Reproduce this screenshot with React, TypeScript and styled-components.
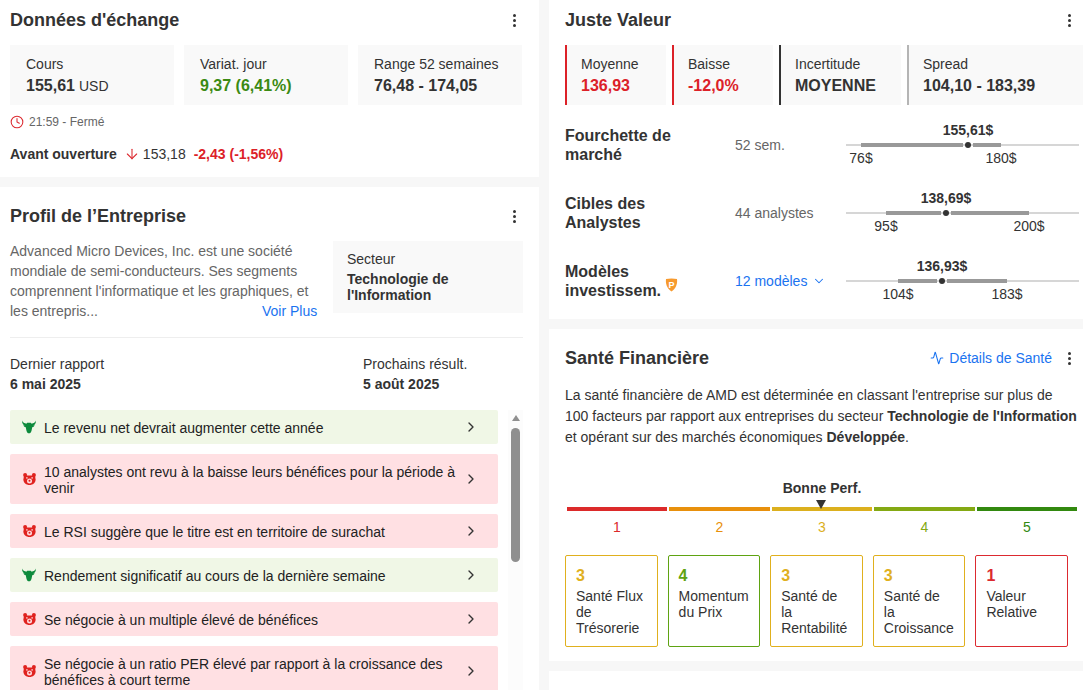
import React from "react";
import styled, { createGlobalStyle } from "styled-components";
import { Activity, ArrowDown, ChevronDown, ChevronRight, Clock } from "lucide-react";

const Global = createGlobalStyle`
  html, body { margin: 0; padding: 0; background: #f7f7f7; }
  body { font-family: "Liberation Sans", Arial, sans-serif; color: #333; overflow: hidden; }
  * { box-sizing: border-box; }
`;

const Page = styled.div`
  display: grid;
  grid-template-columns: 539px 534px;
  gap: 10px;
  width: 1083px;
  height: 690px;
  overflow: hidden;
`;
const Column = styled.div`
  display: flex;
  flex-direction: column;
  gap: 10px;
  min-width: 0;
`;
const Card = styled.section<{ $h: number; $left?: number; $right?: number }>`
  height: ${(p) => p.$h}px;
  flex: none;
  background: #fff;
  padding: 0 ${(p) => p.$right ?? 17}px 0 ${(p) => p.$left ?? 10}px;
  overflow: hidden;
`;
const Head = styled.header<{ $top?: number; $right?: number }>`
  height: 40px;
  margin-top: ${(p) => p.$top ?? 0}px;
  padding-right: ${(p) => p.$right ?? 0}px;
  display: flex;
  align-items: center;
  justify-content: space-between;
`;
const Title = styled.h2`
  margin: 0;
  font-size: 18px;
  line-height: 22px;
  font-weight: 700;
  color: #333;
`;
const DotsBox = styled.span`
  width: 14px;
  height: 14px;
  display: inline-flex;
  flex-direction: column;
  align-items: center;
  justify-content: center;
  gap: 2px;
  flex: none;
  i { width: 3px; height: 3px; border-radius: 50%; background: #333; display: block; }
`;
const Dots = () => (
  <DotsBox><i /><i /><i /></DotsBox>
);
const StatRow = styled.div<{ $cols: string }>`
  display: grid;
  grid-template-columns: ${(p) => p.$cols};
  gap: 10px;
  height: 60px;
  margin-top: 5px;
`;
const StatRowTight = styled(StatRow)`
  gap: 6px;
`;
const Stat = styled.div<{ $edge?: string }>`
  background: #f9f9f9;
  padding: 10px 0 0 ${(p) => (p.$edge ? 14 : 16)}px;
  border-left: ${(p) => (p.$edge ? `2px solid ${p.$edge}` : "none")};
  white-space: nowrap;
`;
const StatLabel = styled.div`
  font-size: 14px;
  line-height: 19px;
  color: #333;
`;
const StatValue = styled.div<{ $c?: string }>`
  font-size: 16px;
  line-height: 23px;
  font-weight: 700;
  color: ${(p) => p.$c ?? "#333"};
`;
const Unit = styled.span`
  font-size: 14px;
  font-weight: 400;
  margin-left: 4px;
`;
const TimeRow = styled.div`
  display: flex;
  align-items: center;
  gap: 5px;
  height: 16px;
  margin-top: 9px;
  font-size: 12px;
  color: #666;
  svg { color: #dc2a30; flex: none; }
`;
const PreRow = styled.div`
  display: flex;
  align-items: center;
  height: 20px;
  margin-top: 14px;
  font-size: 14px;
  color: #333;
`;
const PreLabel = styled.strong`
  font-weight: 700;
  margin-right: 7px;
`;
const PreArrow = styled.span`
  display: inline-flex;
  color: #dc2a30;
  margin-right: 3px;
`;
const PreDelta = styled.strong`
  color: #dc2128;
  font-size: 14px;
  font-weight: 700;
  margin-left: 8px;
`;
const ProfileTop = styled.div`
  display: grid;
  grid-template-columns: 323px 190px;
  height: 96px;
  margin-top: 5px;
  gap: 0;
  margin-right: -1px;
`;
const Desc = styled.p`
  margin: 0;
  width: 310px;
  font-size: 14px;
  line-height: 20px;
  color: #666;
`;
const More = styled.a`
  margin-left: 164px;
  color: #1a73f0;
`;
const Sector = styled.div`
  height: 72px;
  background: #f9f9f9;
  padding: 9px 14px 0;
  font-size: 14px;
`;
const SectorLabel = styled.div`
  line-height: 18px;
  margin-bottom: 3px;
`;
const SectorValue = styled.div`
  font-weight: 700;
  line-height: 16px;
`;
const Divider = styled.hr`
  margin: 0 -1px 0 0;
  border: 0;
  border-top: 1px solid #eeeeee;
`;
const Dates = styled.div`
  display: grid;
  grid-template-columns: 353px 1fr;
  margin-top: 16px;
  font-size: 14px;
  line-height: 20px;
  height: 56px;
`;
const DateValue = styled.div`
  font-weight: 700;
`;
const ListArea = styled.div`
  display: flex;
  gap: 10px;
  margin-right: -1px;
`;
const List = styled.div`
  width: 488px;
  display: flex;
  flex-direction: column;
  gap: 10px;
  flex: none;
`;
const Insight = styled.div<{ $bull: boolean }>`
  min-height: 34px;
  display: flex;
  align-items: center;
  padding: 0 19px 0 12px;
  gap: 8px;
  border-radius: 2px;
  background: ${(p) => (p.$bull ? "#f0f7e6" : "#ffe0e3")};
  font-size: 14px;
  line-height: 16px;
  color: #222;
  svg.go { flex: none; color: #333; margin-left: auto; }
`;
const InsightText = styled.span`
  flex: 1;
  padding: 10px 0 8px;
`;
const IconSlot = styled.span`
  width: 14px;
  display: inline-flex;
  justify-content: center;
  flex: none;
`;
const ScrollTrack = styled.div`
  width: 15px;
  height: 280px;
  flex: none;
  background: #fcfcfc;
  display: flex;
  flex-direction: column;
  align-items: center;
`;
const ScrollArrow = styled.div`
  width: 0;
  height: 0;
  margin-top: 5px;
  border-left: 4.5px solid transparent;
  border-right: 4.5px solid transparent;
  border-bottom: 6px solid #8f8f8f;
`;
const ScrollThumb = styled.div`
  width: 9px;
  height: 134px;
  margin-top: 7px;
  border-radius: 5px;
  background: #8f8f8f;
`;
const ValueRows = styled.div`
  margin-top: 6px;
`;
const ValueRow = styled.div`
  display: grid;
  grid-template-columns: 170px 111px 233px;
  height: 68px;
  align-items: center;
`;
const RowTitle = styled.div`
  font-size: 16px;
  line-height: 19.5px;
  font-weight: 700;
  color: #333;
`;
const RowNote = styled.div`
  font-size: 14px;
  color: #666;
`;
const ModelLink = styled.a`
  display: inline-flex;
  align-items: center;
  gap: 5px;
  font-size: 14px;
  color: #1a73f0;
`;
const Range = styled.div`
  position: relative;
  height: 2px;
  background: #d6d6d6;
`;
const RangeBar = styled.div`
  position: absolute;
  top: -1px;
  height: 4px;
  background: #999;
`;
const RangeDot = styled.div`
  position: absolute;
  top: -2px;
  width: 6px;
  height: 6px;
  margin-left: -3px;
  border-radius: 50%;
  background: #333;
`;
const RangeValue = styled.div`
  position: absolute;
  top: -22px;
  transform: translateX(-50%);
  font-size: 14px;
  line-height: 16px;
  font-weight: 700;
  color: #333;
`;
const RangeEnd = styled.div`
  position: absolute;
  top: 6px;
  transform: translateX(-50%);
  font-size: 14px;
  line-height: 16px;
  color: #333;
`;
const Slider = ({ v, min, max, dot, a, b }: { v: string; min: string; max: string; dot: number; a: number; b: number }) => {
  const pct = (n: number) => `${(n / 233) * 100}%`;
  return (
    <Range>
      <RangeBar style={{ left: pct(a), width: pct(dot - a - 5) }} />
      <RangeBar style={{ left: pct(dot + 5), width: pct(b - dot - 5) }} />
      <RangeDot style={{ left: pct(dot) }} />
      <RangeValue style={{ left: pct(dot) }}>{v}</RangeValue>
      <RangeEnd style={{ left: pct(a) }}>{min}</RangeEnd>
      <RangeEnd style={{ left: pct(b) }}>{max}</RangeEnd>
    </Range>
  );
};
const HealthActions = styled.div`
  display: flex;
  align-items: center;
  gap: 10px;
`;
const HealthLink = styled.a`
  display: inline-flex;
  align-items: center;
  gap: 5px;
  font-size: 14px;
  color: #1a73f0;
`;
const HealthText = styled.p`
  margin: 7px 0 0;
  width: 512px;
  font-size: 14px;
  line-height: 21px;
  color: #333;
  strong { font-weight: 700; }
`;
const Perf = styled.div`
  margin-top: 32px;
  text-align: center;
  font-size: 14px;
  line-height: 16px;
  font-weight: 700;
  width: 512px;
  padding-left: 2px;
`;
const Scale = styled.div`
  position: relative;
  display: grid;
  grid-template-columns: 100px 101px 100px 101px 100px;
  gap: 2px;
  width: 512px;
  margin-top: 11px;
  padding-left: 2px;
`;
const Marker = styled.div`
  position: absolute;
  left: 251px;
  top: -7px;
  width: 0;
  height: 0;
  border-left: 5px solid transparent;
  border-right: 5px solid transparent;
  border-top: 9px solid #333;
`;
const ScaleStep = styled.div<{ $c: string }>`
  color: ${(p) => p.$c};
  text-align: center;
  font-size: 14px;
  line-height: 16px;
  &::before {
    content: "";
    display: block;
    height: 4px;
    margin-bottom: 8px;
    background: ${(p) => p.$c};
  }
`;
const Factors = styled.div`
  display: grid;
  grid-template-columns: repeat(5, 1fr);
  width: 503px;
  gap: 10px;
  margin-top: 20px;
`;
const Factor = styled.div<{ $c: string }>`
  height: 92px;
  border: 1px solid ${(p) => p.$c};
  border-radius: 2px;
  padding: 9px 10px 0 10px;
  font-size: 14px;
  line-height: 16px;
  color: #333;
  b { display: block; font-size: 16px; line-height: 21px; margin-bottom: 2px; color: ${(p) => p.$c}; }
`;

const Bull = () => (
  <svg width="15" height="14" viewBox="0 0 15 14" aria-hidden="true">
    <path fill="#0d8a3c" d="M0 0 C.6 1.6 1.8 2.6 3.4 2.9 L4.6 3.6 L5.6 2.4 H9.4 L10.4 3.6 L11.6 2.9 C13.2 2.6 14.4 1.6 15 0 C15 3 13.6 5 11.8 5.4 L13.6 5.2 C13 6.6 12 7.2 11 7.2 L10.2 11 C9.8 12.8 8.8 13.8 7.5 13.8 C6.2 13.8 5.2 12.8 4.8 11 L4 7.2 C3 7.2 2 6.6 1.4 5.2 L3.2 5.4 C1.4 5 0 3 0 0 Z" />
  </svg>
);
const Bear = () => (
  <svg width="13" height="12" viewBox="0 0 13 12" aria-hidden="true">
    <circle cx="2.1" cy="2.1" r="2" fill="#e0221f" />
    <circle cx="10.9" cy="2.1" r="2" fill="#e0221f" />
    <path fill="#e0221f" d="M1 2.5 H12 L12.6 6.5 C12.6 9.8 9.8 12 6.5 12 C3.2 12 .4 9.8 .4 6.5 Z" />
    <circle cx="6.5" cy="8" r="2.5" fill="#ffd9dc" />
    <circle cx="6.5" cy="7.8" r="1" fill="#e0221f" />
    <rect x="3.2" y="4.2" width="1.4" height="1.4" fill="#ffd9dc" />
    <rect x="8.4" y="4.2" width="1.4" height="1.4" fill="#ffd9dc" />
  </svg>
);
const ProBadge = styled.svg`
  display: inline-block;
  vertical-align: middle;
  position: relative;
  top: -7px;
  margin: -4px 0 -4px 4px;
`;
const Pro = () => (
  <ProBadge width="13" height="14" viewBox="0 0 13 14" aria-hidden="true">
    <path fill="#f79a2e" d="M1 1 C4 .2 9 .2 12 1 C12.6 6 11 10.5 6.5 13.5 C2 10.5 .4 6 1 1 Z" />
    <text x="6.5" y="9.5" textAnchor="middle" fontSize="9" fontWeight="700" fontFamily="Liberation Sans, sans-serif" fill="#fff">P</text>
  </ProBadge>
);

const insights = [
  { bull: true, text: "Le revenu net devrait augmenter cette année" },
  { bull: false, text: "10 analystes ont revu à la baisse leurs bénéfices pour la période à venir" },
  { bull: false, text: "Le RSI suggère que le titre est en territoire de surachat" },
  { bull: true, text: "Rendement significatif au cours de la dernière semaine" },
  { bull: false, text: "Se négocie à un multiple élevé de bénéfices" },
  { bull: false, text: "Se négocie à un ratio PER élevé par rapport à la croissance des bénéfices à court terme" },
];
const steps = [
  { c: "#dc2a2a", n: 1 },
  { c: "#e8900c", n: 2 },
  { c: "#dcb01e", n: 3 },
  { c: "#84a913", n: 4 },
  { c: "#32890f", n: 5 },
];
const factors = [
  { c: "#e0b01e", n: 3, t: "Santé Flux de Trésorerie" },
  { c: "#5fa312", n: 4, t: "Momentum du Prix" },
  { c: "#e0b01e", n: 3, t: "Santé de la Rentabilité" },
  { c: "#e0b01e", n: 3, t: "Santé de la Croissance" },
  { c: "#dc2a30", n: 1, t: "Valeur Relative" },
];

export default function App() {
  return (
    <Page>
      <Global />
      <Column>
        <Card $h={177}>
          <Head $right={1}>
            <Title>Données d'échange</Title>
            <Dots />
          </Head>
          <StatRow $cols="164px 164px 164px">
            <Stat>
              <StatLabel>Cours</StatLabel>
              <StatValue>155,61<Unit>USD</Unit></StatValue>
            </Stat>
            <Stat>
              <StatLabel>Variat. jour</StatLabel>
              <StatValue $c="#3b8a12">9,37 (6,41%)</StatValue>
            </Stat>
            <Stat>
              <StatLabel>Range 52 semaines</StatLabel>
              <StatValue>76,48 - 174,05</StatValue>
            </Stat>
          </StatRow>
          <TimeRow>
            <Clock size={14} strokeWidth={1.8} />
            21:59 - Fermé
          </TimeRow>
          <PreRow>
            <PreLabel>Avant ouverture</PreLabel>
            <PreArrow><ArrowDown size={16} strokeWidth={1.6} /></PreArrow>
            153,18
            <PreDelta>-2,43 (-1,56%)</PreDelta>
          </PreRow>
        </Card>
        <Card $h={503}>
          <Head $top={9} $right={1}>
            <Title>Profil de l’Entreprise</Title>
            <Dots />
          </Head>
          <ProfileTop>
            <Desc>
              Advanced Micro Devices, Inc. est une société mondiale de semi-conducteurs. Ses segments comprennent l'informatique et les graphiques, et les entrepris...
              <More>Voir Plus</More>
            </Desc>
            <Sector>
              <SectorLabel>Secteur</SectorLabel>
              <SectorValue>Technologie de l'Information</SectorValue>
            </Sector>
          </ProfileTop>
          <Divider />
          <Dates>
            <div>
              Dernier rapport
              <DateValue>6 mai 2025</DateValue>
            </div>
            <div>
              Prochains résult.
              <DateValue>5 août 2025</DateValue>
            </div>
          </Dates>
          <ListArea>
            <List>
              {insights.map((it) => (
                <Insight key={it.text} $bull={it.bull}>
                  <IconSlot>{it.bull ? <Bull /> : <Bear />}</IconSlot>
                  <InsightText>{it.text}</InsightText>
                  <ChevronRight className="go" size={16} strokeWidth={2} />
                </Insight>
              ))}
            </List>
            <ScrollTrack>
              <ScrollArrow />
              <ScrollThumb />
            </ScrollTrack>
          </ListArea>
        </Card>
      </Column>
      <Column>
        <Card $h={319} $left={16} $right={0}>
          <Head $right={7}>
            <Title>Juste Valeur</Title>
            <Dots />
          </Head>
          <StatRowTight $cols="101px 101px 122px 176px">
            <Stat $edge="#dc2128">
              <StatLabel>Moyenne</StatLabel>
              <StatValue $c="#dc2128">136,93</StatValue>
            </Stat>
            <Stat $edge="#dc2128">
              <StatLabel>Baisse</StatLabel>
              <StatValue $c="#dc2128">-12,0%</StatValue>
            </Stat>
            <Stat $edge="#333">
              <StatLabel>Incertitude</StatLabel>
              <StatValue>MOYENNE</StatValue>
            </Stat>
            <Stat $edge="#b5b5b5">
              <StatLabel>Spread</StatLabel>
              <StatValue>104,10 - 183,39</StatValue>
            </Stat>
          </StatRowTight>
          <ValueRows>
            <ValueRow>
              <RowTitle>Fourchette de<br />marché</RowTitle>
              <RowNote>52 sem.</RowNote>
              <Slider v="155,61$" min="76$" max="180$" a={15} b={155} dot={122} />
            </ValueRow>
            <ValueRow>
              <RowTitle>Cibles des<br />Analystes</RowTitle>
              <RowNote>44 analystes</RowNote>
              <Slider v="138,69$" min="95$" max="200$" a={40} b={183} dot={100} />
            </ValueRow>
            <ValueRow>
              <RowTitle>Modèles<br />investissem.<Pro /></RowTitle>
              <div>
                <ModelLink>12 modèles <ChevronDown size={14} strokeWidth={1.8} /></ModelLink>
              </div>
              <Slider v="136,93$" min="104$" max="183$" a={52} b={161} dot={96} />
            </ValueRow>
          </ValueRows>
        </Card>
        <Card $h={332} $left={16} $right={7}>
          <Head $top={9}>
            <Title>Santé Financière</Title>
            <HealthActions>
              <HealthLink><Activity size={14} strokeWidth={1.8} /> Détails de Santé</HealthLink>
              <Dots />
            </HealthActions>
          </Head>
          <HealthText>
            La santé financière de AMD est déterminée en classant l'entreprise sur plus de 100 facteurs par rapport aux entreprises du secteur <strong>Technologie de l'Information</strong> et opérant sur des marchés économiques <strong>Développée</strong>.
          </HealthText>
          <Perf>Bonne Perf.</Perf>
          <Scale>
            <Marker />
            {steps.map((s) => (
              <ScaleStep key={s.n} $c={s.c}>{s.n}</ScaleStep>
            ))}
          </Scale>
          <Factors>
            {factors.map((f) => (
              <Factor key={f.t} $c={f.c}>
                <b>{f.n}</b>
                {f.t}
              </Factor>
            ))}
          </Factors>
        </Card>
        <Card $h={40} />
      </Column>
    </Page>
  );
}
